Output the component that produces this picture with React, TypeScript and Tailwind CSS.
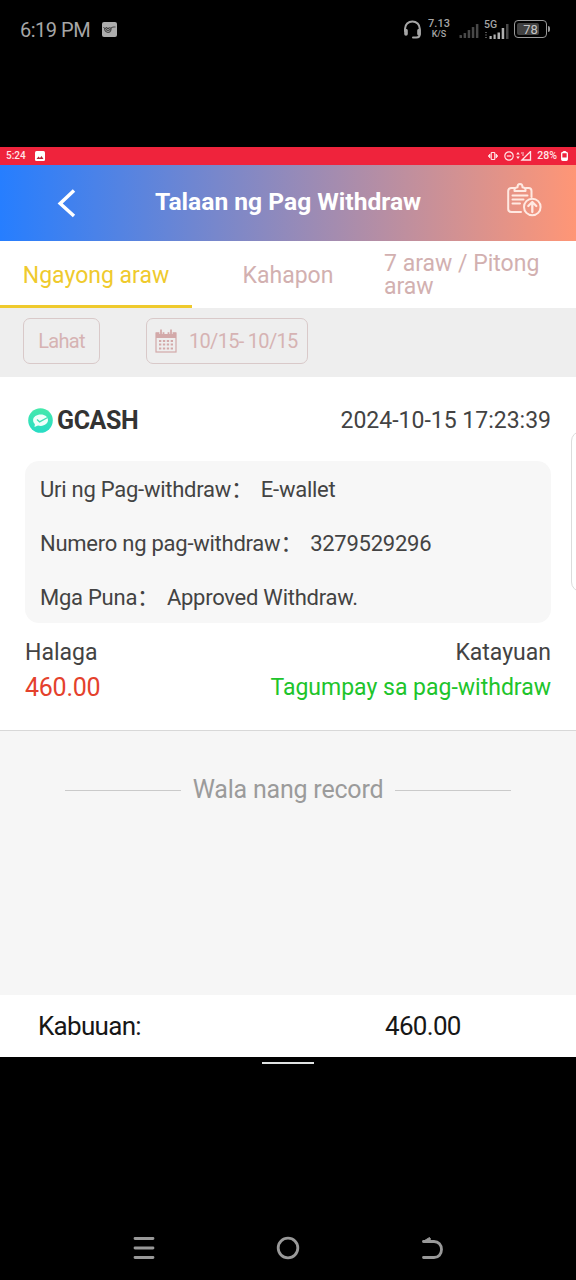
import React from 'react';

interface DetailRowProps {
  label: string;
  value: string;
}

function DetailRow({ label, value }: DetailRowProps) {
  return (
    <div className="flex h-[54px] items-center whitespace-pre">
      <span>{label}：</span>
      <span className="ml-[8px]">{value}</span>
    </div>
  );
}

function SignalBars({ className, lit }: { className: string; lit: number }) {
  const heights = [3, 5, 8, 11, 14];
  return (
    <svg className={className} viewBox="0 0 20 15" fill="none">
      {heights.map((h, i) => (
        <rect key={h} x={i * 4.1 + 0.5} y={15 - h} width="2.5" height={h} rx="0.6" fill={i < lit ? '#b0b0b0' : '#484848'} />
      ))}
    </svg>
  );
}

/* Outer phone status bar */
function PhoneStatusBar() {
  return (
    <div className="flex h-[58px] items-center bg-black pl-5 pr-[26px] text-[#a6a6a6]">
      <span className="mt-[2px] text-[20px] leading-none tracking-[-0.500px]">6:19 PM</span>
      <svg className="ml-[12px] h-[15px] w-[15px]" viewBox="0 0 15 15">
        <rect width="15" height="15" rx="2" fill="#adadad" />
        <path d="M1.5 5l1.5 2 1.5-2 1.5 2.2L7.5 5M8.500 7.500c0-3 5-2.500 5-2.500" fill="none" stroke="#3c3c3c" strokeWidth="1" />
        <path d="M2.500 7c1 4.500 6 4.500 6.500.500M4 6.500c1 3 3 3 4 0M9 5v3" fill="none" stroke="#4a4a4a" strokeWidth="1.100" />
      </svg>
      <div className="ml-auto flex items-center">
        <svg className="h-[19px] w-[19px]" viewBox="0 0 19 19" fill="none" stroke="#a6a6a6" strokeWidth="2">
          <path d="M2 11V8.800a7.300 7.300 0 0 1 14.800 0V14c0 2.300-1.300 3.500-3.500 3.500H10" strokeLinecap="round" />
          <path d="M3 10.500v3.500M16 10.500v3.500" strokeWidth="3.600" strokeLinecap="round" />
        </svg>
        <div className="ml-[5px] flex w-[24px] flex-col items-center font-medium leading-none">
          <span className="text-[11px] leading-[10px]">7.13</span>
          <span className="text-[9px] leading-[10px]">K/S</span>
        </div>
        <SignalBars className="mt-[2px] ml-[8px] h-[15px] w-[20px]" lit={0} />
        <div className="ml-[5px] flex h-[19px] w-[25px] items-end">
          <div className="relative flex w-full justify-end">
            <span className="absolute -top-[3px] left-0 text-[10.500px] font-medium leading-[10px]">5G</span>
            <svg className="h-[16px] w-[25px]" viewBox="0 0 25 16" fill="#b0b0b0">
              <path d="M1 9h2v1H1zM1 11.500h2v1H1zM1 14h2v1H1z" fill="#555" />
              <rect x="5.500" y="13" width="2.200" height="3" />
              <rect x="9.500" y="11.500" width="2.200" height="4.500" />
              <rect x="13.500" y="9.500" width="2.500" height="6.500" />
              <rect x="17.700" y="5" width="2.500" height="11" />
              <rect x="22" y="1" width="2.500" height="15" fill="#484848" />
            </svg>
          </div>
        </div>
        <div className="ml-[5px] flex items-center">
          <div className="flex h-[18px] w-[33px] rounded-[4px] border-[1.500px] border-[#999] p-[2px]">
            <div className="flex w-[22px] items-center justify-center rounded-[2px] bg-[#404040]">
              <span className="ml-[5px] text-[13px] leading-none text-[#c4c4c4]">78</span>
            </div>
          </div>
          <div className="ml-px h-[6px] w-[2px] rounded-r bg-[#999]" />
        </div>
      </div>
    </div>
  );
}

/* Status bar of the captured device */
function InnerStatusBar() {
  return (
    <div className="flex h-[18px] items-center bg-[#ef233c] pl-[6px] pr-[8px] text-[#ffe5e8]">
      <span className="text-[10px] font-medium leading-none">5:24</span>
      <svg className="ml-[9px] h-[10px] w-[10px]" viewBox="0 0 10 10">
        <rect width="10" height="10" rx="1.500" fill="#fff" />
        <path d="M1.500 8l2-2.500 1.500 1.500 1.500-2L8.500 8z" fill="#b32638" />
      </svg>
      <div className="ml-auto flex items-center">
        <svg className="h-[10px] w-[10px]" viewBox="0 0 10 10" fill="none" stroke="currentColor" strokeWidth="1.200">
          <rect x="3.200" y="1.500" width="3.600" height="7" rx="0.800" />
          <path d="M1.700 3v4M8.300 3v4M.5 4.200v1.600M9.500 4.200v1.600" />
        </svg>
        <svg className="ml-[6px] h-[10px] w-[10px]" viewBox="0 0 10 10" fill="none" stroke="currentColor" strokeWidth="1.200">
          <circle cx="5" cy="5" r="4.200" />
          <path d="M2.800 5h4.400" />
        </svg>
        <svg className="ml-[2px] h-[10px] w-[16px]" viewBox="0 0 16 10" fill="currentColor">
          <path d="M2 1l1.800 2.500H.2zM2 8L.2 5.500h3.600z" />
          <path d="M6 9l8.500-8.500V9z" fill="none" stroke="currentColor" strokeWidth="1.300" />
          <path d="M5 2h3M6 4h2" stroke="currentColor" strokeWidth="0.900" />
        </svg>
        <span className="ml-[5px] text-[10.500px] font-medium leading-none">28%</span>
        <svg className="ml-[4px] h-[10px] w-[7px]" viewBox="0 0 7 10">
          <rect x="0.700" y="1.500" width="5.600" height="7.800" rx="1" fill="none" stroke="#fff" strokeWidth="1.300" />
          <path d="M2.200 0h2.600v1.500H2.200zM1 6.500h5V9H1z" fill="#fff" />
        </svg>
      </div>
    </div>
  );
}

function Header() {
  return (
    <header className="flex h-[76px] items-center bg-[linear-gradient(90deg,#267eff_0%,#ff9676_100%)] text-white">
      <svg className="ml-[57px] mb-px h-[30px] w-[19px]" viewBox="0 0 19 30" fill="none" stroke="#fff" strokeWidth="3.500">
        <path d="M17 2.500L3.200 15.500l13.800 12.500" />
      </svg>
      <h1 className="ml-[79px] mb-px w-[266px] whitespace-nowrap text-[24.600px] font-bold leading-none">Talaan ng Pag Withdraw</h1>
      <svg className="ml-[86px] mb-[6px] h-[34px] w-[35px]" viewBox="0 0 35 34" fill="none" stroke="#ffe9e2" strokeWidth="2" strokeLinecap="round" strokeLinejoin="round">
        <path d="M8 5H4.500C2.500 5 1.200 6.200 1.200 8v18c0 1.800 1.300 3 3.300 3H14M19 5h2.500c2 0 3 1.200 3 3v6" />
        <path d="M7.500 8V6.500c0-1.500 1.500-2 3-2.200C10.500 2.300 11.500 1 13 1s2.500 1.300 2.500 3.300c1.500.2 3 .7 3 2.200V8z" />
        <path d="M5.500 12.500h15M5.500 16.500h11M5.500 20.500h7.500" />
        <circle cx="25.300" cy="24" r="8.300" />
        <path d="M25.300 29v-9.500M21.300 23l4-4 4 4" strokeWidth="2.300" />
      </svg>
    </header>
  );
}

function CalendarIcon() {
  return (
    <svg className="h-[24px] w-[22px]" viewBox="0 0 22 24" fill="none" stroke="#d3a9a9">
      <path d="M1 3.500h20V9H1z" fill="#d3a9a9" stroke="none" />
      <rect x="1" y="4" width="20" height="19" strokeWidth="1.200" />
      <path d="M6 .5V5M11 .5V5M16 .5V5" stroke="#efefef" strokeWidth="3.200" />
      <path d="M6 .5V5M16 .5V5" strokeWidth="1.800" />
      <path d="M4 12h14M4 15.500h14M4 19.500h14" strokeWidth="2.200" strokeDasharray="2.300 1.600" />
    </svg>
  );
}

function GcashIcon() {
  return (
    <svg className="h-[25px] w-[25px]" viewBox="0 0 25 25">
      <defs>
        <linearGradient id="gcash" x1="0" y1="0" x2="0" y2="1">
          <stop offset="0" stopColor="#45e9ab" />
          <stop offset="1" stopColor="#27dcc5" />
        </linearGradient>
      </defs>
      <circle cx="12.500" cy="12.500" r="12.300" fill="url(#gcash)" />
      <path d="M12.800 6.500c4.200 0 7.200 2.400 7.200 5.600s-3 5.800-7.200 5.800c-1 0-2-.1-2.800-.4L6.500 19l.4-2.900c-1.200-1-1.800-2.400-1.800-4 0-3.200 3.500-5.600 7.700-5.600z" fill="#effffb" />
      <path d="M9 11.500l2.600 2.300 8-4.300" fill="none" stroke="#3fe0b5" strokeWidth="1.400" />
    </svg>
  );
}

export default function App() {
  return (
    <div className="relative flex h-[1280px] w-[576px] flex-col overflow-hidden bg-black font-[Roboto,'Noto_Sans_CJK_SC',sans-serif]">
      <PhoneStatusBar />

      <div className="mt-[89px] flex h-[910px] flex-col bg-white">
        <InnerStatusBar />
        <Header />

        {/* Period tabs */}
        <nav className="grid h-[67px] grid-cols-3 text-[23px] leading-[23px] text-[#d2b0b0]">
          <div className="flex items-center justify-center border-b-[3px] border-[#efca2d] pt-[4px] text-[#efca2d]">
            <span className="whitespace-nowrap">Ngayong araw</span>
          </div>
          <div className="flex items-center justify-center pt-px">
            <span>Kahapon</span>
          </div>
          <div className="flex items-center pt-px">
            <span className="w-[170px]">7 araw / Pitong araw</span>
          </div>
        </nav>

        {/* Filters */}
        <div className="flex h-[69px] bg-[#eeeeee] pl-[23px] pt-[10px] text-[20px] leading-none tracking-[-0.700px] text-[#d6b3b3]">
          <div className="flex h-[46px] w-[77px] items-center justify-center rounded-[7px] border border-[#d9c9c9]">Lahat</div>
          <div className="ml-[46px] flex h-[46px] w-[162px] items-center rounded-[7px] border border-[#d9c9c9] pl-[8px]">
            <CalendarIcon />
            <span className="ml-[12px] whitespace-nowrap">10/15- 10/15</span>
          </div>
        </div>

        {/* Withdrawal record */}
        <section className="h-[354px] border-b border-[#d8d8d8] px-[25px] leading-none text-[#434343]">
          <div className="flex h-[84px] items-center pt-[2px]">
            <span className="ml-[3px]"><GcashIcon /></span>
            <span className="ml-[4px] text-[25px] font-bold tracking-[-0.400px] text-[#333]">GCASH</span>
            <span className="ml-auto pt-px text-[23px]">2024-10-15 17:23:39</span>
          </div>
          <div className="h-[162px] rounded-[14px] bg-[#f7f7f7] pl-[15px] pt-[2px] text-[22px] tracking-[-0.250px]">
            <DetailRow label="Uri ng Pag-withdraw" value="E-wallet" />
            <DetailRow label="Numero ng pag-withdraw" value="3279529296" />
            <DetailRow label="Mga Puna" value="Approved Withdraw." />
          </div>
          <div className="mt-[12px] flex h-[34px] items-center justify-between text-[23px]">
            <span>Halaga</span>
            <span>Katayuan</span>
          </div>
          <div className="flex h-[36px] items-center justify-between text-[23px]">
            <span className="text-[25px] tracking-[-0.250px] text-[#e4412c]">460.00</span>
            <span className="text-[#20c42b]">Tagumpay sa pag-withdraw</span>
          </div>
        </section>

        <div className="flex h-[264px] justify-center bg-[#f6f6f6] pt-[44px]">
          <div className="flex h-[28px] items-center text-[25px] leading-none text-[#9b9b9b]">
            <span className="mt-[3px] h-px w-[116px] bg-[#cacaca]" />
            <span className="w-[214px] whitespace-nowrap text-center tracking-[-0.200px]">Wala nang record</span>
            <span className="mt-[3px] h-px w-[116px] bg-[#cacaca]" />
          </div>
        </div>

        {/* Total */}
        <footer className="flex h-[62px] items-center bg-white pl-[38px] text-[26px] leading-none tracking-[-0.700px] text-[#171717]">
          <span className="w-[347px]">Kabuuan:</span>
          <span>460.00</span>
        </footer>
      </div>

      <div className="mx-auto mt-[5px] h-[2px] w-[52px] bg-[#e0e3e3]" />

      {/* Edge panel handle */}
      <div className="absolute left-[571px] top-[431px] h-[161px] w-[20px] rounded-[10px] border border-[#dcdcdc] bg-white" />

      {/* System navigation */}
      <div className="mt-auto flex h-[64px] items-center justify-between px-[132px] text-[#999]">
        <svg className="h-[24px] w-[24px]" viewBox="0 0 24 24" fill="none" stroke="currentColor" strokeWidth="2.800" strokeLinecap="round">
          <path d="M3 2.500h18M3 12h18M3 21.500h18" />
        </svg>
        <svg className="h-[24px] w-[24px]" viewBox="0 0 24 24" fill="none" stroke="currentColor" strokeWidth="2.800">
          <circle cx="12" cy="12" r="9.800" />
        </svg>
        <svg className="h-[24px] w-[24px]" viewBox="0 0 24 24" fill="none" stroke="currentColor" strokeWidth="2.800" strokeLinecap="round">
          <path d="M3.500 5.500H14c4.500 0 7.500 3.500 7.500 8s-3 8-7.500 8H3.500" />
          <path d="M3 5.500L9.500 1.500l1 1.500-2 3z" fill="currentColor" strokeWidth="1" />
        </svg>
      </div>
    </div>
  );
}
